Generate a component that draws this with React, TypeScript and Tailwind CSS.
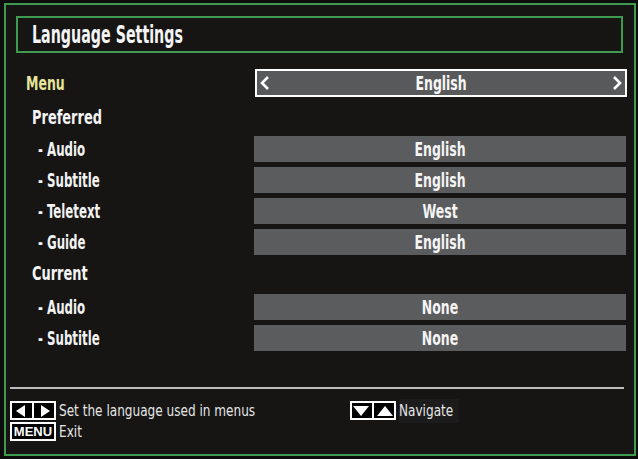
import React from "react";

const font = { fontFamily: '"DejaVu Sans Condensed", "DejaVu Sans", sans-serif' };

function Row({ label, value }: { label: string; value: string }) {
  return (
    <div className="flex h-[26px] items-center">
      <div className="w-[248px] pl-[32px] text-[19px] font-semibold text-[#f2f2f2]">
        <span className="inline-block origin-left scale-x-[0.69] whitespace-nowrap">- {label}</span>
      </div>
      <div className="flex h-[26px] w-[372px] items-center justify-center bg-[#5b5c5e] text-[19px] font-semibold text-[#f4f4f4]">
        <span className="inline-block scale-x-[0.73]">{value}</span>
      </div>
    </div>
  );
}

function Heading({ text }: { text: string }) {
  return (
    <div className="flex h-[26px] items-center pl-[26px] text-[20px] font-semibold text-[#f4f4f4]">
      <span className="inline-block origin-left scale-x-[0.72] whitespace-nowrap">{text}</span>
    </div>
  );
}

function Tri({ dir }: { dir: "l" | "r" | "u" | "d" }) {
  const pts = {
    l: "13,3 13,15 4,9",
    r: "5,3 5,15 14,9",
    u: "9,4 17,14 1,14",
    d: "1,4 17,4 9,14",
  }[dir];
  return (
    <svg width="18" height="18" viewBox="0 0 18 18" className="block">
      <polygon points={pts} fill="#ffffff" />
    </svg>
  );
}

export default function App() {
  return (
    <div className="h-[459px] w-[638px] bg-[#0c0c0c] pl-[4px] pt-[3px]" style={font}>
      <div className="flex h-[453px] w-[632px] flex-col border-2 border-[#3d9a4e] bg-[#161514]">
        {/* title */}
        <div className="ml-[10px] mt-[11px] flex h-[37px] w-[607px] items-center border-2 border-[#3d9a4e] pl-[14px]">
          <span className="inline-block origin-left scale-x-[0.66] whitespace-nowrap text-[24px] font-semibold text-[#f4f4f4]">
            Language Settings
          </span>
        </div>

        {/* menu row */}
        <div className="mt-[16px] flex h-[28px] items-center">
          <div className="w-[249px] pl-[20px] text-[19px] font-semibold text-[#e6e59b]">
            <span className="inline-block origin-left scale-x-[0.73]">Menu</span>
          </div>
          <div className="flex h-[28px] w-[372px] items-center justify-between border-2 border-white bg-[#58595b] px-[3px] text-[19px] font-semibold text-[#f6f6f6]">
            <svg width="10" height="14" viewBox="0 0 10 14"><polyline points="8,1 2,7 8,13" fill="none" stroke="#fff" strokeWidth="2.6" /></svg>
            <span className="inline-block scale-x-[0.73]">English</span>
            <svg width="10" height="14" viewBox="0 0 10 14"><polyline points="2,1 8,7 2,13" fill="none" stroke="#fff" strokeWidth="2.6" /></svg>
          </div>
        </div>

        <div className="mt-[7px]">
          <Heading text="Preferred" />
        </div>
        <div className="mt-[6px] flex flex-col gap-[5px]">
          <Row label="Audio" value="English" />
          <Row label="Subtitle" value="English" />
          <Row label="Teletext" value="West" />
          <Row label="Guide" value="English" />
        </div>
        <div className="mt-[5px]">
          <Heading text="Current" />
        </div>
        <div className="mt-[8px] flex flex-col gap-[5px]">
          <Row label="Audio" value="None" />
          <Row label="Subtitle" value="None" />
        </div>

        {/* separator */}
        <div className="ml-[4px] mt-[36px] h-[2px] w-[614px] bg-[#bdbdbd]" />

        {/* footer */}
        <div className="mt-[12px] flex pl-[4px] text-[16px] text-[#e6e6e6]">
          <div className="flex w-[340px] flex-col gap-[2px]">
            <div className="flex h-[19px] items-center gap-[3px]">
              <div className="flex h-[19px] items-center gap-[2px] border-2 border-white bg-black">
                <Tri dir="l" />
                <div className="h-full w-[2px] bg-white" />
                <Tri dir="r" />
              </div>
              <span className="inline-block origin-left scale-x-[0.84] whitespace-nowrap">Set the language used in menus</span>
            </div>
            <div className="flex h-[19px] items-center gap-[3px]">
              <div className="flex h-[19px] w-[46px] items-center justify-center border-2 border-white bg-black text-[13px] font-bold text-white" style={{ fontFamily: '"Liberation Sans", sans-serif' }}>
                MENU
              </div>
              <span className="inline-block origin-left scale-x-[0.84]">Exit</span>
            </div>
          </div>
          <div className="flex h-[19px] items-center gap-[3px]">
            <div className="flex h-[19px] items-center gap-[2px] border-2 border-white bg-black">
              <Tri dir="d" />
              <div className="h-full w-[2px] bg-white" />
              <Tri dir="u" />
            </div>
            <span className="inline-block origin-left scale-x-[0.84] bg-[#1c1c1c] pr-[6px]">Navigate</span>
          </div>
        </div>
      </div>
    </div>
  );
}
